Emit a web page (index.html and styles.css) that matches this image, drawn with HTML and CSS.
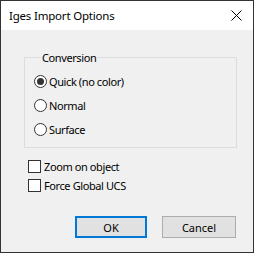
FILE: index.html
```html
<!DOCTYPE html>
<html lang="en">
<head>
  <meta charset="UTF-8" />
  <title>Iges Import Options</title>
  <link rel="stylesheet" href="styles.css">
</head>
<body>
  <div class="dialog">
    <div class="titlebar">
      <span class="title">Iges Import Options</span>
      <svg class="close" width="11" height="11" viewBox="0 0 11 11">
        <path d="M0.5 0.5 L10.5 10.5 M10.5 0.5 L0.5 10.5" stroke="#000" stroke-width="1" fill="none"/>
      </svg>
    </div>

    <div class="content">
      <fieldset class="group">
        <legend>Conversion</legend>
        <div class="radio-row">
          <span class="radio checked"></span>
          <span class="label">Quick (no color)</span>
        </div>
        <div class="radio-row">
          <span class="radio"></span>
          <span class="label">Normal</span>
        </div>
        <div class="radio-row">
          <span class="radio"></span>
          <span class="label">Surface</span>
        </div>
      </fieldset>

      <div class="checks">
        <div class="check-row">
          <span class="checkbox"></span>
          <span class="label">Zoom on object</span>
        </div>
        <div class="check-row">
          <span class="checkbox"></span>
          <span class="label">Force Global UCS</span>
        </div>
      </div>

      <div class="buttons">
        <button class="btn btn-default">OK</button>
        <button class="btn">Cancel</button>
      </div>
    </div>
  </div>
</body>
</html>
```

FILE: styles.css
```css
body {
  margin: 0;
  font-family: 'Noto Sans', sans-serif;
  font-size: 11px;
  color: #000;
}

.dialog {
  width: 254px;
  height: 253px;
  box-sizing: border-box;
  border: 1px solid #333;
  background: #f0f0f0;
  display: flex;
  flex-direction: column;
}

.titlebar {
  height: 29px;
  background: #fff;
  display: flex;
  align-items: center;
  justify-content: space-between;
  padding: 0 11px 0 8px;
}

.title {
  font-size: 11.5px;
  letter-spacing: -0.2px;
  color: #000;
}

.close {
  display: block;
}

.content {
  flex: 1;
  display: flex;
  flex-direction: column;
  padding: 20px 0 0 23px;
}

.group {
  width: 202px;
  margin: 0;
  padding: 4px 0 6px 9px;
  border: 1px solid #dcdcdc;
  box-sizing: content-box;
}

.group legend {
  margin-left: 7px;
  padding: 0 1px;
  line-height: 15px;
  height: 15px;
  letter-spacing: -0.4px;
}

.label {
  letter-spacing: -0.4px;
}

.radio-row,
.check-row {
  display: flex;
  align-items: center;
  height: 24px;
}

.radio {
  width: 11px;
  height: 11px;
  border: 1px solid #333;
  border-radius: 50%;
  background: #fff;
  margin-right: 2px;
  display: flex;
  align-items: center;
  justify-content: center;
}

.radio.checked::after {
  content: "";
  width: 7px;
  height: 7px;
  border-radius: 50%;
  background: #333;
}

.checks {
  margin-top: 9px;
  padding-left: 4px;
}

.check-row {
  height: 19px;
}

.checkbox {
  width: 11px;
  height: 11px;
  border: 1px solid #333;
  background: #fff;
  margin-right: 3px;
}

.buttons {
  margin-top: 21px;
  display: flex;
  justify-content: flex-end;
  gap: 15px;
  padding-right: 17px;
}

.btn {
  font-family: inherit;
  font-size: 11px;
  color: #000;
  width: 74px;
  height: 22px;
  padding: 0;
  background: #e1e1e1;
  border: 1px solid #adadad;
}

.btn-default {
  width: 72px;
  border: 2px solid #0078d7;
}
```
